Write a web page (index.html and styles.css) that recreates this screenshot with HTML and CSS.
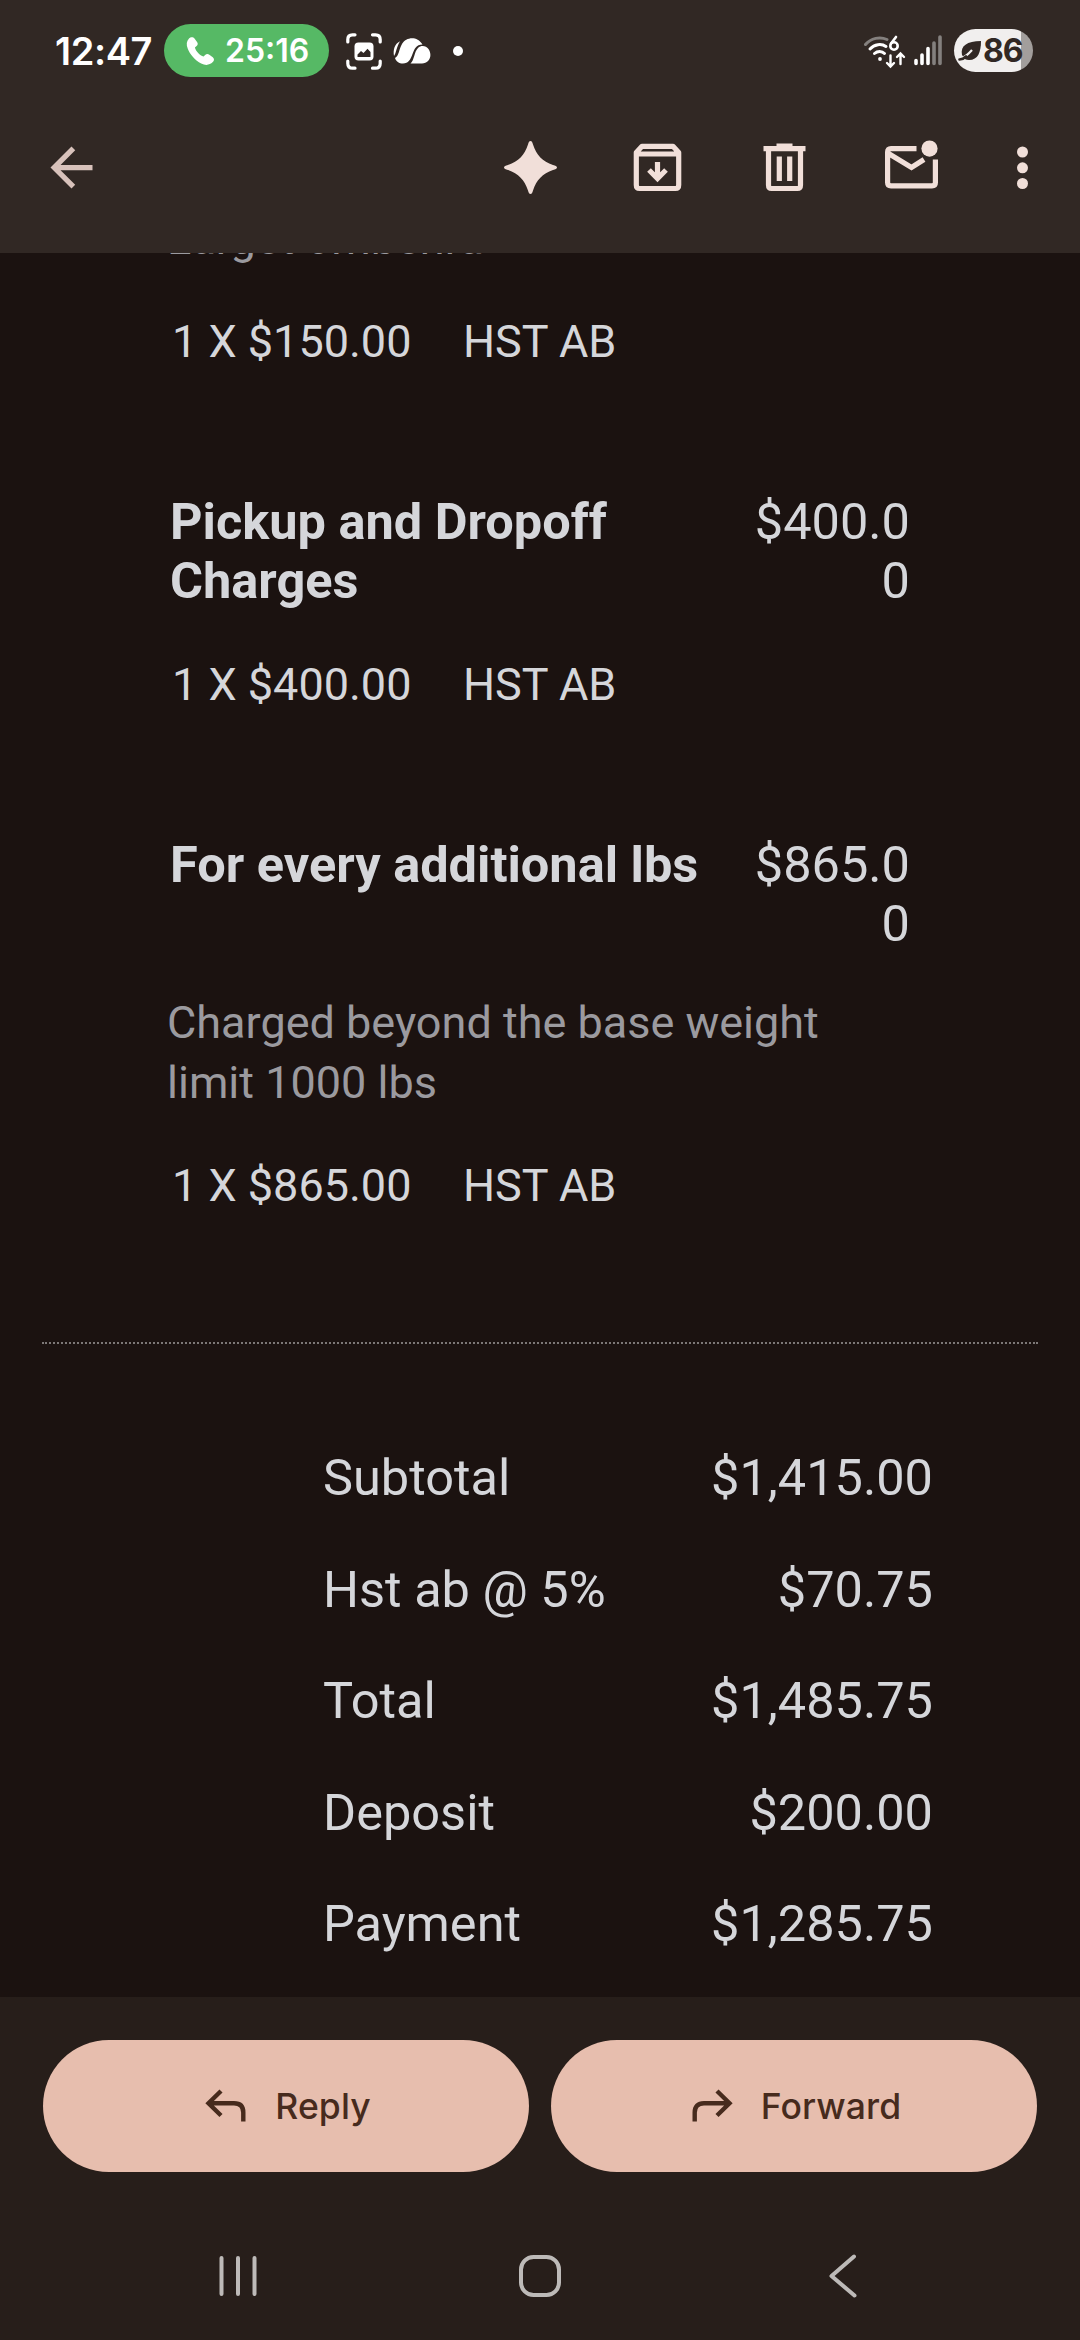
FILE: index.html
```html
<!DOCTYPE html>
<html lang="en">
<head>
<meta charset="utf-8">
<title>Invoice</title>
<link rel="stylesheet" href="styles.css">
</head>
<body>
<div class="screen">
  <header class="header">
    <div class="status">
      <span class="clock">12:47</span>
      <span class="call">
        <svg class="call-icon" width="30" height="30" viewBox="0 0 30 30"><path d="M4 2.5C5.500.8 8.200.6 9.500 2.400L12.200 6.200C13.100 7.500 12.800 8.900 11.600 10L9.900 11.500C11 15.500 14.700 19.300 18.600 20.500L20.100 19C21.400 17.800 23 17.700 24.300 18.700L27.800 21.200C29.500 22.500 29.300 24.800 27.800 26.100C24.800 29.200 20.600 29.800 16.200 27.500C10.200 24.500 4.900 18.500 2.700 12.600C1.200 8.500 1.400 5.200 4 2.500Z" fill="#fff"/></svg>
        <span class="call-time">25:16</span>
      </span>
      <svg class="capture" width="36" height="37" viewBox="0 0 36 37" fill="none">
        <path d="M1.800 9V6.500Q1.800 1.800 6.500 1.800H9M26.500 1.800H29.500Q34.200 1.800 34.200 6.500V9M34.200 28V30.500Q34.200 35.200 29.500 35.200H26.500M9 35.200H6.500Q1.800 35.200 1.800 30.500V28" stroke="#fff" stroke-width="3.200" stroke-linecap="round"/>
        <rect x="8.500" y="9.500" width="19" height="18" rx="4" fill="#fff"/>
        <path d="M11.500 24V21.500L15 18L17.500 20L21.500 15.800L24.500 19V24Z" fill="#312824"/>
      </svg>
      <svg class="cloud" width="38" height="26" viewBox="0 0 38 26">
        <path d="M7 3.200C1.500 6 0 11.500 1 18C3.200 15 3.800 8 7 3.200Z" fill="#fff"/>
        <path d="M2 20C6 18 6 11 9 6C13-1 24-2.500 29.500 6.500C23 6.500 21.500 11 19.500 16C17.500 21.500 15.500 25.500 10 25.500C6 25.500 3 23.500 2 20Z" fill="#fff"/>
        <path d="M17.500 25.500C21.500 22 21 14 25 10C28 7 33 7.500 35.500 11C40 18 36 25.500 29 25.500Z" fill="#fff"/>
      </svg>
      <span class="more-dot"></span>
      <svg class="wifi" width="42" height="34" viewBox="0 0 42 34" fill="none" stroke="#fff" stroke-width="3" stroke-linecap="round">
        <path d="M1.500 9.500C7 3 16 1.300 23 4.500" stroke="#84807e"/>
        <path d="M6 14C10.500 9 17.500 8.300 22 11.500M10.500 18.500C13.500 15.800 18 15.800 20.500 18.500"/>
        <circle cx="16" cy="24" r="1.900" fill="#fff" stroke="none"/>
        <path d="M32 2L27 8.500" stroke-width="2.600"/><circle cx="30" cy="11" r="3.700" stroke-width="2.600"/>
        <path d="M26.500 20.500V31M23 28L26.500 31.500L30 28M36.500 29V19M33 22L36.500 18.500L40 22" stroke-width="2.400"/>
      </svg>
      <svg class="signal" width="28" height="31" viewBox="0 0 28 31" stroke-width="3.600" stroke-linecap="round">
        <path d="M2 25.500V28.500M8 20V28.500M14 13.500V28.500" stroke="#fff"/><path d="M20 8V28.500M26 2V28.500" stroke="#84807e"/>
      </svg>
      <span class="battery">
        <svg width="24" height="22" viewBox="0 0 24 22"><path d="M4 15C2 6 9 1 23 1C23 12 20 20 11 20C9.500 20 8.300 19.700 7.300 19.200Z" fill="#312824"/><path d="M14 10C10 14.500 6.500 17 4 18" stroke="#f1efee" stroke-width="2.200" fill="none"/><path d="M1.500 19.500Q5 19.500 8 16.500" stroke="#312824" stroke-width="2.600" stroke-linecap="round" fill="none"/></svg>
        <span>86</span>
      </span>
    </div>
    <nav class="toolbar">
      <svg class="back" width="63" height="63" viewBox="0 0 24 24"><path d="M20 11H7.830l5.590-5.590L12 4l-8 8 8 8 1.410-1.410L7.830 13H20z" fill="#d8c2bb"/></svg>
      <div class="actions">
        <svg width="63" height="63" viewBox="0 0 63 63"><path d="M31.500 5C33 5 33.300 6.500 34 8.500C37.500 19 43.500 25.500 54 29C56.500 29.800 58 30.300 58 31.500S56.500 33.200 54 34C43.500 37.500 37.500 44 34 54.500C33.300 56.500 33 58 31.500 58S29.700 56.500 29 54.500C25.500 44 19.500 37.500 9 34C6.500 33.200 5 32.700 5 31.500S6.500 29.800 9 29C19.500 25.500 25.500 19 29 8.500C29.700 6.500 30 5 31.500 5Z" fill="#f1dfd9"/></svg>
        <svg width="63" height="63" viewBox="0 0 63 63" fill="none" stroke="#f1dfd9" stroke-width="5.200"><path d="M10.300 16.500V49Q10.300 52.500 13.500 52.500H49.500Q52.700 52.500 52.700 49V16.500L47 10.300H16ZM10.300 18H52.700" stroke-linejoin="round"/><path d="M31.500 26V40M23 34L31.500 42.500L40 34"/></svg>
        <svg width="63" height="63" viewBox="0 0 63 63" fill="none" stroke="#f1dfd9" stroke-width="5.200"><path d="M10.500 12.600H52.500M15.500 13V49Q15.500 52.500 18.500 52.500H44.500Q47.500 52.500 47.500 49V13M26.300 20.500V45M36.700 20.500V45"/><path d="M23.500 10H39.500" stroke-width="5"/></svg>
        <svg width="63" height="63" viewBox="0 0 63 63" fill="none" stroke="#f1dfd9" stroke-width="5.200"><path d="M36.500 12.600H11Q7.600 12.600 7.600 16V46.500Q7.600 49.800 11 49.800H52Q55.400 49.800 55.400 46.500V23.500M8.500 17.500L31.500 31.500L44 23.500"/><circle cx="49.500" cy="12.600" r="8.100" fill="#f1dfd9" stroke="none"/></svg>
        <svg width="31" height="63" viewBox="0 0 31 63" fill="#f1dfd9"><circle cx="15.500" cy="16" r="5.500"/><circle cx="15.500" cy="31.800" r="5.500"/><circle cx="15.500" cy="47.500" r="5.500"/></svg>
      </div>
    </nav>
  </header>

  <main class="message">
    <section class="item first">
      <p class="desc">Larget ombenra</p>
      <p class="meta"><span class="qty">1 X $150.00</span><span>HST AB</span></p>
    </section>
    <section class="item">
      <div class="head"><h2>Pickup and Dropoff Charges</h2><span class="price">$400.00</span></div>
      <p class="meta"><span class="qty">1 X $400.00</span><span>HST AB</span></p>
    </section>
    <section class="item">
      <div class="head"><h2>For every additional lbs</h2><span class="price">$865.00</span></div>
      <p class="desc">Charged beyond the base weight limit 1000 lbs</p>
      <p class="meta"><span class="qty">1 X $865.00</span><span>HST AB</span></p>
    </section>
    <hr class="divider">
    <dl class="totals">
      <div><dt>Subtotal</dt><dd>$1,415.00</dd></div>
      <div><dt>Hst ab @ 5%</dt><dd>$70.75</dd></div>
      <div><dt>Total</dt><dd>$1,485.75</dd></div>
      <div><dt>Deposit</dt><dd>$200.00</dd></div>
      <div><dt>Payment</dt><dd>$1,285.75</dd></div>
    </dl>
  </main>

  <footer class="footer">
    <div class="buttons">
      <button class="btn"><svg width="42" height="34" viewBox="0 0 42 34" fill="none" stroke="#472b1d" stroke-width="4.400"><path d="M16 2L3.500 14.300L16 26.500M4 14.300H29Q38.300 14.300 38.300 23.500V32.500"/></svg><span class="reply">Reply</span></button>
      <button class="btn"><svg width="42" height="34" viewBox="0 0 42 34" fill="none" stroke="#472b1d" stroke-width="4.400"><path d="M26 2L38.500 14.300L26 26.500M38 14.300H13Q3.700 14.300 3.700 23.500V32.500"/></svg><span class="forward">Forward</span></button>
    </div>
    <nav class="sysnav">
      <svg width="44" height="44" viewBox="0 0 44 44" fill="none" stroke="#bdbab8" stroke-width="4" stroke-linecap="round"><path d="M5.500 4V40M22 4V40M38.500 4V40"/></svg>
      <svg width="44" height="44" viewBox="0 0 44 44" fill="none" stroke="#bdbab8" stroke-width="4"><rect x="3" y="3" width="38" height="38" rx="12.500"/></svg>
      <svg width="44" height="44" viewBox="0 0 44 44" fill="none" stroke="#bdbab8" stroke-width="4" stroke-linecap="round" stroke-linejoin="round"><path d="M34 2.500L11.500 22L34.500 41.500"/></svg>
    </nav>
  </footer>
</div>
</body>
</html>
```
FILE: styles.css
```css
* { box-sizing: border-box; }
body { margin: 0; background: #1b1210; font-family: Roboto, sans-serif; }
h2, p, dl, dd { margin: 0; }
svg { display: block; flex: none; }

.screen {
  width: 1080px;
  height: 2340px;
  display: flex;
  flex-direction: column;
  overflow: hidden;
}

.header { height: 253px; flex: none; background: #312824; }

.status {
  height: 101px;
  padding: 0 47px 0 55px;
  display: flex;
  align-items: center;
  color: #fff;
  font-family: Inter, sans-serif;
  font-weight: 600;
}
.clock { width: 109px; font-size: 38px; letter-spacing: -0.4px; }
.call {
  width: 165px;
  height: 53px;
  padding-left: 21px;
  border-radius: 27px;
  background: #56b965;
  display: flex;
  align-items: center;
  gap: 10px;
}
.call-time { font-size: 32px; }
.capture { margin-left: 17px; margin-top: 2px; }
.cloud { margin-left: 11px; margin-top: 1px; }
.more-dot { width: 10px; height: 10px; margin-left: 22px; border-radius: 50%; background: #fff; }
.wifi { margin-left: auto; margin-top: 2px; }
.signal { margin-left: 8px; }
.battery {
  width: 79px;
  height: 43px;
  margin-left: 12px;
  padding-left: 4px;
  border-radius: 22px;
  background: linear-gradient(to right, #f1efee 67px, #a29e9c 67px);
  color: #312824;
  font-size: 32px;
  font-weight: 700;
  letter-spacing: -1px;
  display: flex;
  align-items: center;
  gap: 1px;
}

.toolbar {
  height: 133px;
  padding: 0 42px 0 40px;
  display: flex;
  align-items: center;
  justify-content: space-between;
}
.actions { display: flex; gap: 64px; }

.message { height: 1744px; flex: none; overflow: hidden; color: #d5d6da; }
.item { width: 743px; margin-left: 167px; margin-bottom: 119.500px; }
.first { margin-top: -44px; margin-bottom: 120px; }
.head {
  padding-left: 3px;
  margin-bottom: 45.500px;
  display: flex;
  justify-content: space-between;
  font-size: 50.500px;
  line-height: 59px;
}
.head h2 { width: 560px; font-size: 50.500px; font-weight: 700; }
.price { width: 158px; text-align: right; word-break: break-all; }
.desc { width: 700px; font-size: 45px; line-height: 60px; color: #9b9a9f; margin-bottom: 43.500px; }
.first .desc { margin-bottom: 42.500px; }
.head + .desc { margin-top: -5.500px; }
.meta { padding-left: 5px; display: flex; font-size: 45px; line-height: 60px; }
.qty { width: 291px; }
.divider { height: 0; margin: 126px 42px 78px; border: 0; border-top: 2px dotted #7d7877; }
.totals { margin-left: 323px; width: 610px; font-size: 50.500px; }
.totals div { height: 111.500px; display: flex; align-items: center; justify-content: space-between; }

.footer { flex: 1; background: #271e1a; padding: 43px 43px 0; }
.buttons { display: grid; grid-template-columns: 1fr 1fr; gap: 22px; }
.btn {
  height: 132px;
  padding: 0 0 0 4px;
  border: 0;
  border-radius: 66px;
  background: #e7beae;
  color: #472b1d;
  font: 500 35.500px Inter, sans-serif;
  display: flex;
  align-items: center;
  justify-content: center;
  gap: 28px;
}
.sysnav { margin-top: 82px; padding: 0 173px; display: flex; justify-content: space-between; }
.reply, .forward { letter-spacing: 0.1px; }
```
